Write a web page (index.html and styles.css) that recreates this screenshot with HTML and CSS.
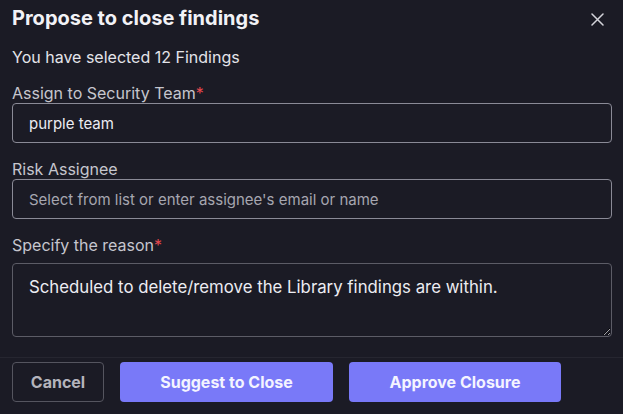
FILE: index.html
```html
<!DOCTYPE html>
<html lang="en">
<head>
<meta charset="utf-8">
<title>Propose to close findings</title>
<link rel="stylesheet" href="styles.css">
</head>
<body>
<div class="dialog">
  <div class="header">
    <h1 class="title">Propose to close findings</h1>
    <button class="close" aria-label="Close">
      <svg width="13" height="13" viewBox="0 0 13 13"><path d="M1 1L12 12M12 1L1 12" stroke="#d4d4da" stroke-width="1.5" stroke-linecap="round"/></svg>
    </button>
  </div>
  <div class="body">
    <p class="summary">You have selected 12 Findings</p>
    <div class="field">
      <label class="label">Assign to Security Team<span class="req">*</span></label>
      <input class="input" type="text" value="purple team">
    </div>
    <div class="field">
      <label class="label">Risk Assignee</label>
      <input class="input" type="text" placeholder="Select from list or enter assignee's email or name">
    </div>
    <div class="field">
      <label class="label">Specify the reason<span class="req">*</span></label>
      <textarea class="textarea">Scheduled to delete/remove the Library findings are within.</textarea>
    </div>
  </div>
  <div class="footer">
    <button class="btn btn-cancel">Cancel</button>
    <button class="btn btn-primary btn-suggest">Suggest to Close</button>
    <button class="btn btn-primary btn-approve">Approve Closure</button>
  </div>
</div>
</body>
</html>
```

FILE: styles.css
```css
html, body {
  margin: 0;
  padding: 0;
  background: #1b1b25;
  color-scheme: dark;
}
body {
  font-family: Inter, "Noto Sans", sans-serif;
  color: #e6e6ec;
  width: 623px;
  height: 414px;
  overflow: hidden;
}
.dialog {
  display: flex;
  flex-direction: column;
}
.header {
  display: flex;
  align-items: center;
  justify-content: space-between;
  padding: 6px 12px 0 12px;
  height: 24px;
}
.title {
  margin: 0;
  font-size: 20px;
  line-height: 24px;
  font-weight: 700;
  color: #f2f2f6;
}
.close {
  background: none;
  border: 0;
  padding: 0;
  width: 13px;
  height: 13px;
  margin-right: 7px;
  margin-top: 2px;
  display: flex;
  cursor: pointer;
}
.body {
  padding: 17px 11px 0 12px;
  display: flex;
  flex-direction: column;
  gap: 16px;
}
.summary {
  margin: 0;
  font-size: 16px;
  line-height: 20px;
  color: #e4e4ea;
}
.field {
  display: flex;
  flex-direction: column;
}
.label {
  font-size: 16px;
  line-height: 20px;
  color: #c6c6ce;
}
.req {
  color: #e5484d;
}
.input, .textarea {
  box-sizing: border-box;
  width: 100%;
  background: transparent;
  border: 1px solid #8a8a96;
  border-radius: 4px;
  font-family: Inter, "Noto Sans", sans-serif;
  font-size: 15px;
  color: #ececf2;
  outline: none;
  margin: 0;
}
.input {
  height: 40px;
  padding: 0 16px;
}
.input::placeholder {
  color: #a6a6b0;
  font-size: 15px;
}
.textarea {
  margin-top: 8px;
  height: 74px;
  padding: 13px 16px;
  font-size: 16.8px;
  line-height: 20px;
  border-color: #5c5c66;
  resize: vertical;
  display: block;
}
.footer {
  margin-top: 20px;
  border-top: 1px solid #262630;
  padding: 4px 12px 0 12px;
  display: flex;
  gap: 16px;
}
.btn {
  height: 40px;
  border-radius: 4px;
  font-family: Inter, "Noto Sans", sans-serif;
  font-size: 16px;
  font-weight: 700;
  cursor: pointer;
  padding: 0;
}
.btn-cancel {
  width: 92px;
  background: transparent;
  border: 1px solid #55555f;
  color: #b4b4bc;
}
.btn-primary {
  background: #7979f8;
  border: 0;
  color: #f4f4ff;
}
.btn-suggest {
  width: 213px;
}
.btn-approve {
  width: 212px;
}
```
